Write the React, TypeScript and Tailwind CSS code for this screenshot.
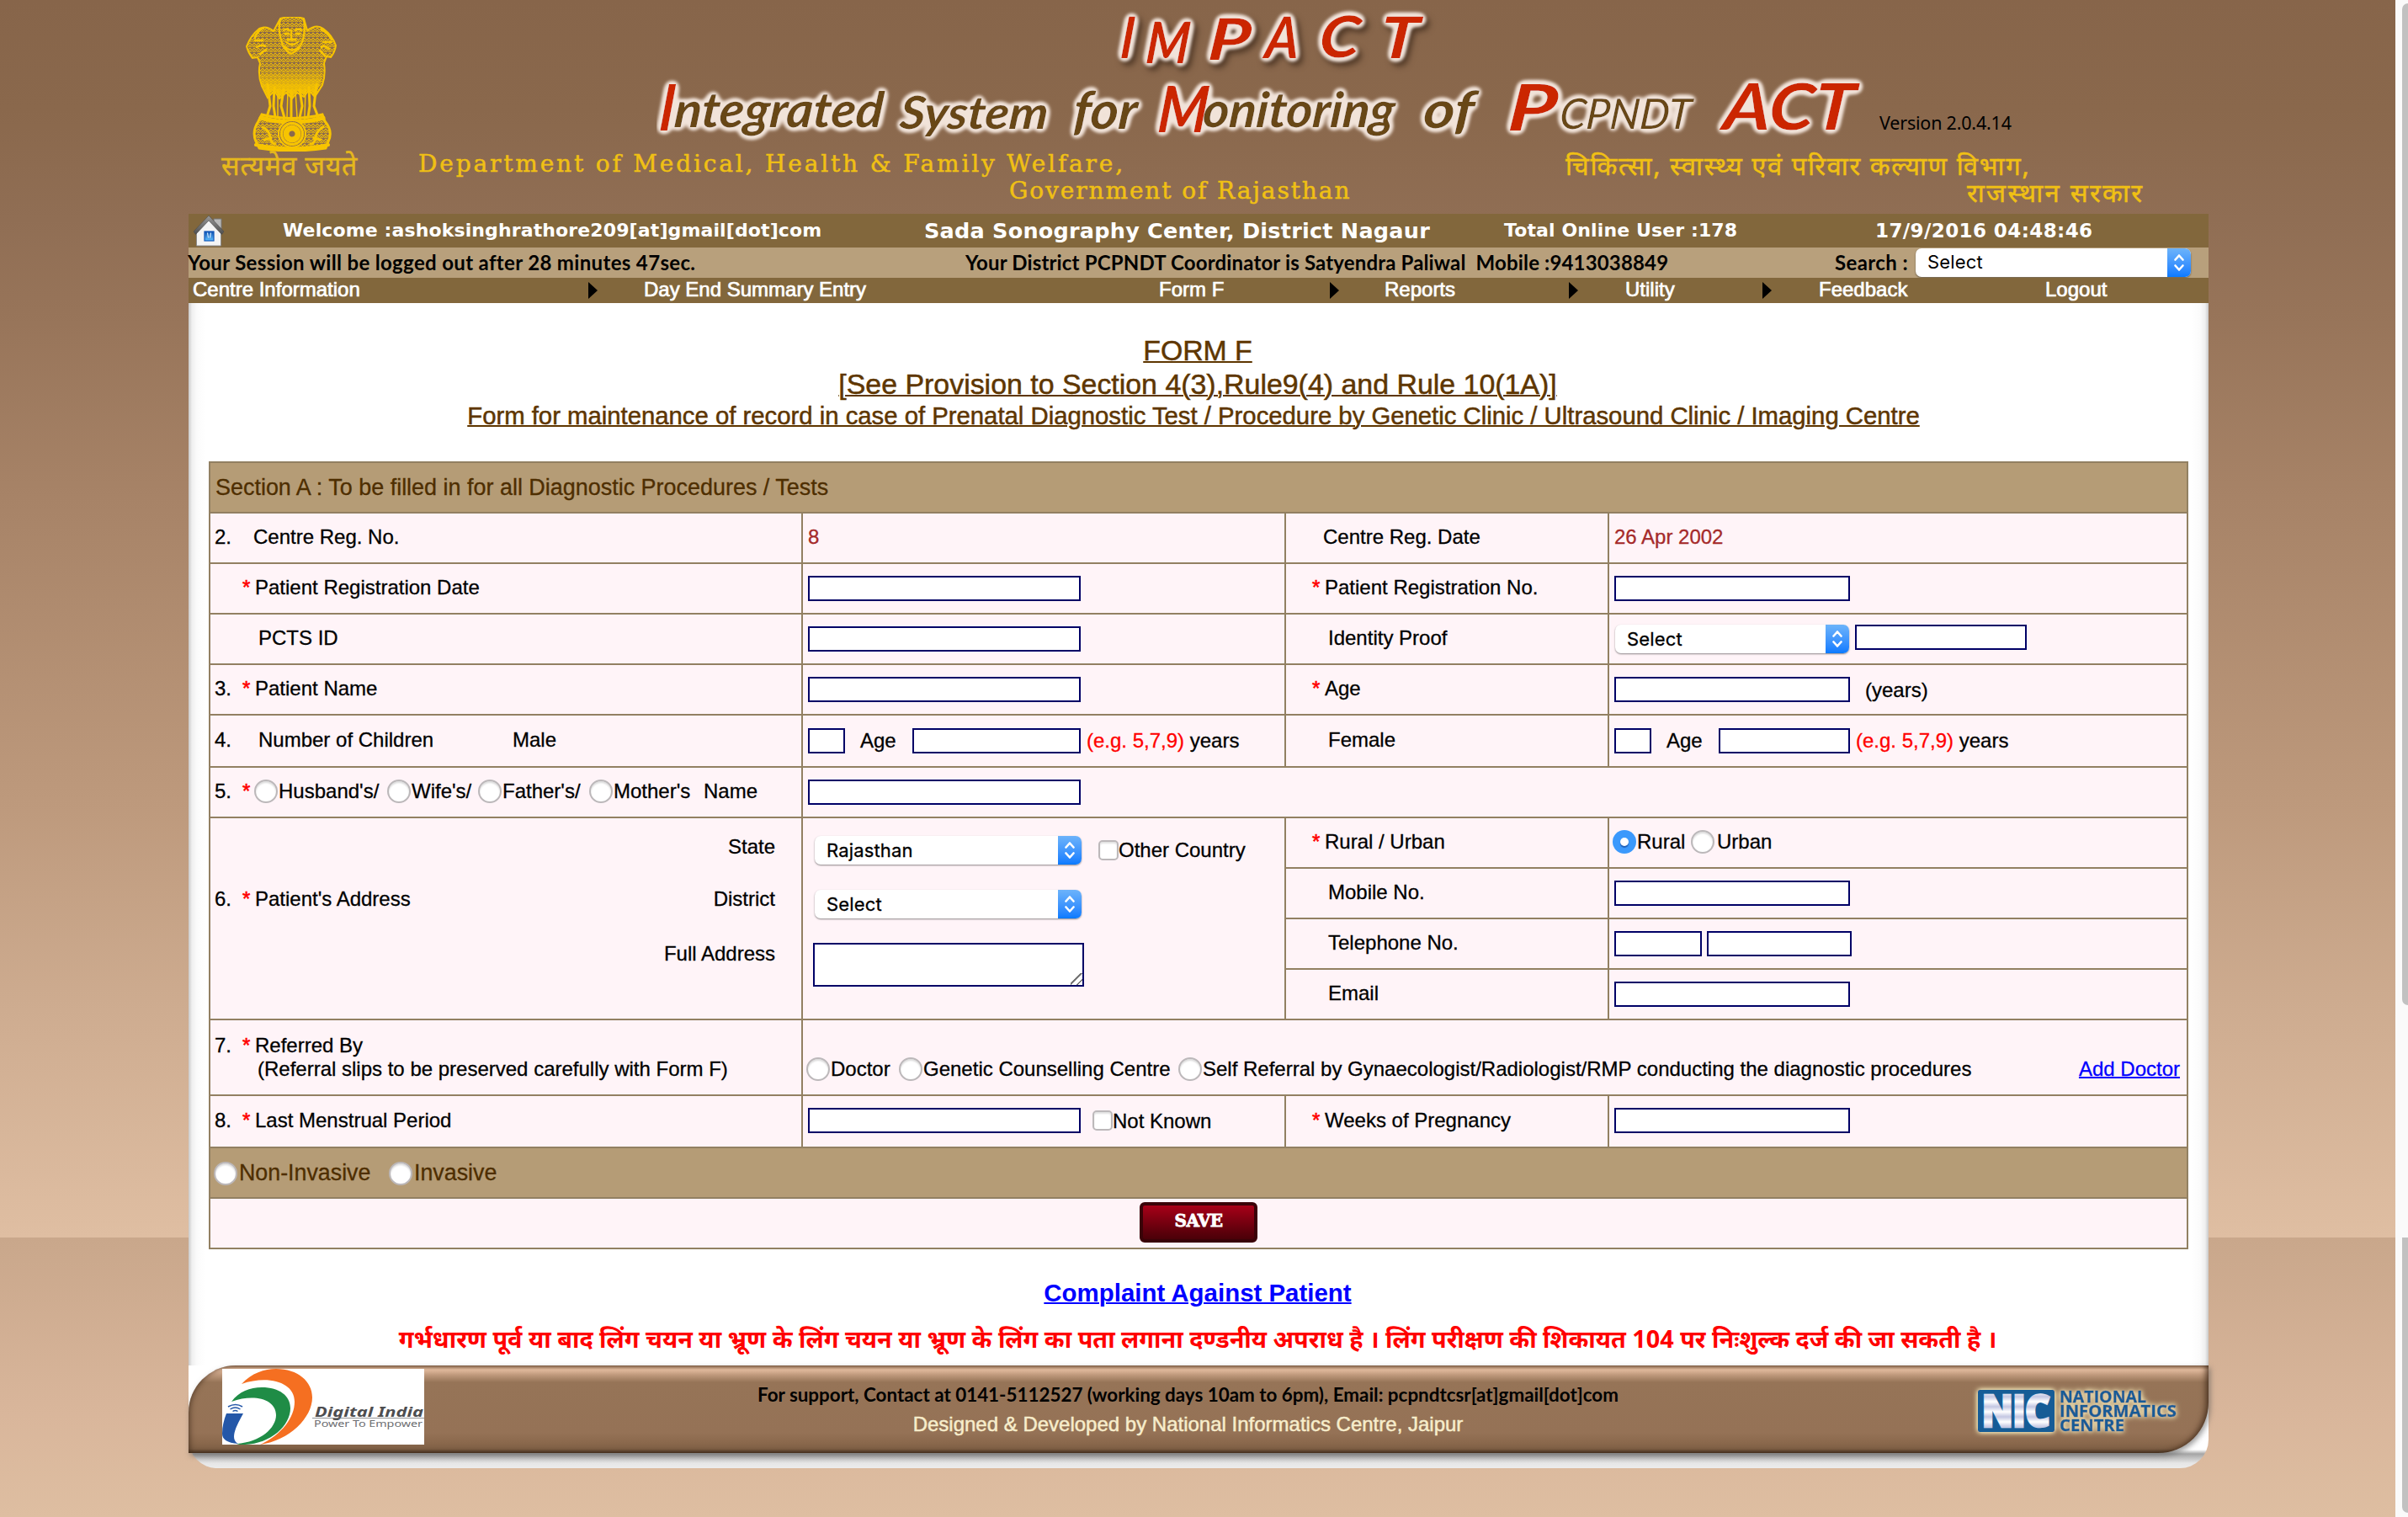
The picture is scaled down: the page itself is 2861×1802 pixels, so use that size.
import type { ReactNode } from "react";

const Star = ({ on = true }: { on?: boolean }) => (
  <span className="w-[15px] shrink-0 text-[#ff0000] [-webkit-text-stroke:0.6px_#ff0000]">{on ? "*" : ""}</span>
);

const Label = ({ n, star, children, className = "" }: { n?: string; star?: boolean; children: ReactNode; className?: string }) => (
  <div className={"flex items-center whitespace-pre bg-[#fff4f8] pb-0.5 pl-[5px] " + className}>
    <span className="w-[33px] shrink-0">{n}</span>
    <Star on={!!star} />
    {children}
  </div>
);

const RLabel = ({ star, children }: { star?: boolean; children: ReactNode }) => (
  <div className="flex items-center whitespace-pre bg-[#fff4f8] pb-0.5 pl-[31px]">
    <Star on={!!star} />
    {children}
  </div>
);

const Cell = ({ children, className = "" }: { children?: ReactNode; className?: string }) => (
  <div className={"flex items-center whitespace-pre bg-[#fff4f8] " + className}>{children}</div>
);

const Input = ({ className }: { className: string }) => (
  <input type="text" className={"h-[30px] shrink-0 border-2 border-[#000066] bg-white px-1 outline-none " + className} />
);

const Chevrons = () => (
  <span className="flex w-7 shrink-0 items-center justify-center bg-linear-to-b from-[#6cb3fa] to-[#077aff]">
    <svg width="14" height="22" viewBox="0 0 14 22" fill="none" stroke="white" strokeWidth="2.6" strokeLinecap="round" strokeLinejoin="round">
      <path d="M2.5 7.5 7 2.5l4.500 5M2.500 14.500 7 19.500l4.500-5" />
    </svg>
  </span>
);

const Select = ({ className, children }: { className: string; children: ReactNode }) => (
  <div className={"flex h-[34px] shrink-0 overflow-hidden rounded-[7px] bg-white font-['Inter',sans-serif] text-[22px] tracking-[0.15px] text-black shadow-[0_1px_2px_rgba(0,0,0,0.45)] " + className}>
    <span className="flex flex-1 items-center pl-3.5">{children}</span>
    <Chevrons />
  </div>
);

const Radio = ({ on, className = "" }: { on?: boolean; className?: string }) =>
  on ? (
    <span className={"flex size-7 shrink-0 items-center justify-center rounded-full bg-[#3b99fc] " + className}>
      <span className="size-2.5 rounded-full bg-white shadow-[0_2px_1px_rgba(0,40,120,0.5)]" />
    </span>
  ) : (
    <span className={"size-7 shrink-0 rounded-full border-2 border-[#bcb8ba] bg-white shadow-[inset_0_2px_2px_rgba(0,0,0,0.14)] " + className} />
  );

const Check = () => (
  <span className="size-6 shrink-0 rounded-[5px] border-2 border-[#bcb8ba] bg-white shadow-[inset_0_2px_2px_rgba(0,0,0,0.12)]" />
);

const Emblem = () => (
  <svg width="110" height="160" viewBox="0 0 110 160" fill="none" stroke="#f7c400" strokeLinecap="round">
    <defs>
      <pattern id="mane" width="5" height="6" patternUnits="userSpaceOnUse">
        <path d="M0 1l2.500 3L5 1M0 4l2.500 3L5 4" stroke="#f7c400" strokeWidth="1.100" />
      </pattern>
      <linearGradient id="fur" x1="0" y1="0" x2="0" y2="1">
        <stop offset="0.250" stopColor="#f7c400" stopOpacity="0" />
        <stop offset="0.700" stopColor="#f7c400" stopOpacity="0.800" />
        <stop offset="1" stopColor="#f7c400" />
      </linearGradient>
    </defs>
    <path d="M41 2q14-4 28 0l4 14q11-8 19-2 11 8 15 20-1 8-6 14l-5-1-3 8q2 15-2 26l-9 14-7-8-6 8-8-5-6 7-7-7-8 7-6-9-8 8-7-14q-5-14-2-27l-3-7-6 1q-5-6-7-14 5-13 15-21 9-4 17 3z" fill="url(#mane)" strokeWidth="2" />
    <path d="M22 48h62q9 16 5 30l-7 15-7-8-6 8-8-5-6 7-7-7-8 7-6-9-8 8-7-14q-4-16 3-32z" fill="url(#fur)" stroke="none" />
    <path d="M41 3q-3 12 1 24 2 12 12 17 11-5 14-17 3-12 1-24M45 16q4-3 7 0M59 16q4-3 7 0M54 16v11M48 30q7 6 14 0M46 35q9 9 18 0" strokeWidth="2.200" />
    <path d="M47 20h4M60 20h4M50 27h9" strokeWidth="3" />
    <path d="M21 13q-8 4-10 12M11 28h9M13 36q6-4 10-1M17 44l7-5M90 15q9 5 12 12M102 30h-10M99 38q-6-5-9-2M94 46l-6-6" strokeWidth="2.600" />
    <path d="M26 80l3 26-4 13M34 84l-1 22 2 13M45 86l-3 20 4 14M54 88v32M64 86l3 20-3 14M75 84l1 22-2 13M84 80l-3 26 5 13" strokeWidth="3" />
    <path d="M38 86v32M50 88l-1 31M59 88l2 31M71 86l-1 32" strokeWidth="1.500" />
    <path d="M19 116q35 9 72 0l3 8q10 12 4 24l-3 8q-41 6-79 0l-4-8q-5-12 3-24z" fill="url(#mane)" strokeWidth="3" />
    <path d="M18 120q36 10 74 0" strokeWidth="5" />
    <path d="M12 152q43 9 86 0" strokeWidth="4" />
    <circle cx="55" cy="139" r="16" fill="#8b694d" strokeWidth="2" />
    <circle cx="55" cy="139" r="12.500" strokeWidth="3.500" strokeDasharray="0.600 2" />
    <circle cx="55" cy="139" r="7" strokeWidth="7" strokeDasharray="0.800 1.400" />
    <path d="M20 131q8 4 9 12t6 8M92 131q-8 4-9 12t-6 8M22 146l8-2M89 146l-8-2" strokeWidth="3" />
  </svg>
);

const words: { t: string; x: number; y: number; w: number; s: number; red?: boolean; thin?: boolean }[] = [
  { t: "I", x: 2, y: 155, w: 18, s: 76, red: true },
  { t: "ntegrated", x: 20, y: 151, w: 248, s: 58 },
  { t: "System", x: 288, y: 153, w: 176, s: 54 },
  { t: "for", x: 494, y: 153, w: 76, s: 62 },
  { t: "M", x: 594, y: 157, w: 60, s: 76, red: true },
  { t: "onitoring", x: 648, y: 151, w: 228, s: 58 },
  { t: "of", x: 910, y: 152, w: 60, s: 61 },
  { t: "P", x: 1010, y: 155, w: 58, s: 76, red: true },
  { t: "CPNDT", x: 1072, y: 153, w: 156, s: 50, thin: true },
  { t: "ACT", x: 1266, y: 154, w: 156, s: 76, red: true },
];

const impact: { t: string; x: number; y: number; w: number }[] = [
  { t: "I", x: 550, y: 69, w: 16 },
  { t: "M", x: 580, y: 75, w: 52 },
  { t: "P", x: 654, y: 71, w: 50 },
  { t: "A", x: 722, y: 69, w: 40 },
  { t: "C", x: 786, y: 68, w: 48 },
  { t: "T", x: 858, y: 69, w: 46 },
];

const Wordmark = () => (
  <svg width="1450" height="176" viewBox="0 0 1450 176" fontFamily="Lato, sans-serif" fontStyle="italic" fontWeight="700" className="shrink-0">
    <defs>
      <filter id="glow" x="-5%" y="-30%" width="110%" height="160%">
        <feGaussianBlur in="SourceAlpha" stdDeviation="4" result="b" />
        <feComponentTransfer in="b" result="s"><feFuncA type="linear" slope="9" intercept="-0.500" /></feComponentTransfer>
        <feGaussianBlur in="s" stdDeviation="1.500" result="e" />
        <feFlood floodColor="#f1e3d9" />
        <feComposite in2="e" operator="in" result="halo" />
        <feMerge><feMergeNode in="halo" /><feMergeNode in="SourceGraphic" /></feMerge>
      </filter>
    </defs>
    <g className="drop-shadow-[4px_5px_3px_rgba(50,32,20,0.65)]">
      <g filter="url(#glow)" fill="#cb2506">
        {impact.map((c) => (
          <text key={c.t} transform={`translate(${c.x} ${c.y}) skewX(-5)`} fontSize="68" textLength={c.w} lengthAdjust="spacingAndGlyphs">{c.t}</text>
        ))}
      </g>
    </g>
    <g filter="url(#glow)">
      {words.map((c) => (
        <text key={c.t} transform={`translate(${c.x} ${c.y}) skewX(-5)`} fontSize={c.s} fill={c.red ? "#cb2506" : "#684719"} fontWeight={c.thin ? 400 : 700} textLength={c.w} lengthAdjust="spacingAndGlyphs">{c.t}</text>
      ))}
    </g>
  </svg>
);

const House = () => (
  <svg width="38" height="38" viewBox="0 0 38 38">
    <defs>
      <linearGradient id="roof" x1="0" y1="0" x2="0" y2="1"><stop offset="0" stopColor="#9a9a9a" /><stop offset="1" stopColor="#4e4e4e" /></linearGradient>
      <linearGradient id="door" x1="0" y1="0" x2="0" y2="1"><stop offset="0" stopColor="#0d4fb0" /><stop offset="1" stopColor="#5fc0ff" /></linearGradient>
    </defs>
    <path d="M25 5h9v12l-9-6z" fill="#b9b9b9" stroke="#777" />
    <path d="M19 4 4.500 20v17h29V20z" fill="#f4f4f4" stroke="#8b8b8b" />
    <path d="M19 1 1 20l2.500 3.500L19 7l15.500 16.500L37 20z" fill="url(#roof)" stroke="#4a4a4a" strokeWidth="0.600" />
    <rect x="14" y="20" width="11" height="11" fill="url(#door)" stroke="#1257b8" strokeWidth="1.200" />
    <path d="M17.500 21.500l1 6M21.500 21.500l-1 6" stroke="#d8efff" strokeWidth="1.200" />
  </svg>
);

const Arrow = () => (
  <svg width="11" height="20" viewBox="0 0 11 20"><path d="M0 0 11 10 0 20z" fill="#000" /></svg>
);

const DigitalIndia = () => (
  <svg width="240" height="90" viewBox="0 0 240 90" className="shrink-0 bg-white">
    <path d="M23 18C35 5 50 0 64 0c26 0 43 15 43 34 0 24-27 51-62 56 26-12 41-32 41-51 0-23-31-32-63-21z" fill="#f56f21" />
    <path d="M11 39C20 27 33 22 47 22c21 0 34 10 34 25 0 20-23 42-54 43-5 0-8 0-10-1 29-2 47-19 47-34 0-19-26-26-53-16z" fill="#1f8c46" />
    <path d="M5 53h20c-7 13-17 30-6 36C6 88 0 84 0 77c0-9 2-16 5-24z" fill="#2457a8" />
    <path d="M7 45q9-5 17 0M9.500 48q6-4 12 0M12.500 50.500q3-2 6 0" fill="none" stroke="#2457a8" strokeWidth="1.500" />
    <text x="110" y="57" fontFamily="Noto Sans, sans-serif" fontStyle="italic" fontWeight="700" fontSize="16" fill="#4d4d4f" textLength="129" lengthAdjust="spacingAndGlyphs">Digital India</text>
    <path d="M107 58.500h133" stroke="#77787b" strokeWidth="0.800" />
    <text x="109" y="68.500" fontFamily="Noto Sans, sans-serif" fontSize="10" fill="#6d6e71" textLength="129" lengthAdjust="spacingAndGlyphs">Power To Empower</text>
  </svg>
);

const Nic = () => (
  <svg width="252" height="72" viewBox="0 0 252 72" fontFamily="Open Sans, sans-serif" fontWeight="700">
    <defs>
      <filter id="halo" x="-10%" y="-20%" width="120%" height="140%">
        <feGaussianBlur in="SourceAlpha" stdDeviation="3" result="b" />
        <feComponentTransfer in="b" result="s"><feFuncA type="linear" slope="2.500" /></feComponentTransfer>
        <feFlood floodColor="#d9c79c" />
        <feComposite in2="s" operator="in" result="h" />
        <feMerge><feMergeNode in="h" /><feMergeNode in="SourceGraphic" /></feMerge>
      </filter>
      <linearGradient id="nicl" x1="0" y1="0" x2="0" y2="6" gradientUnits="userSpaceOnUse" spreadMethod="reflect"><stop offset="0" stopColor="#fff" /><stop offset="1" stopColor="#c3c6e2" /></linearGradient>
    </defs>
    <g filter="url(#halo)" fill="#155b96">
      <rect x="7" y="10" width="91" height="50" rx="2" />
      <g fontSize="19" stroke="#155b96" strokeWidth="0.500">
        <text x="104" y="25" textLength="103" lengthAdjust="spacingAndGlyphs">NATIONAL</text>
        <text x="104" y="42" textLength="139" lengthAdjust="spacingAndGlyphs">INFORMATICS</text>
        <text x="104" y="59" textLength="77" lengthAdjust="spacingAndGlyphs">CENTRE</text>
      </g>
    </g>
    <text x="12" y="53" fontSize="50" fill="url(#nicl)" stroke="url(#nicl)" strokeWidth="4.500" textLength="80" lengthAdjust="spacingAndGlyphs">NIC</text>
  </svg>
);

export default function App() {
  return (
    <div className="flex h-[1802px] w-[2861px] overflow-hidden bg-[linear-gradient(#87654a_0px,#8a684c_130px,#906e54_260px,#977459_370px,#a78367_590px,#bd997c_950px,#ceac90_1200px,#dfbea2_1470px,#c9a78b_1470px,#d9b69b_1680px,#debea1_1802px)] font-['Liberation_Sans',sans-serif] text-2xl leading-7 text-black">
      <div className="ml-[224px] flex w-[2400px] flex-col">
        <header className="flex h-[254px]">
          <div className="flex w-[273px] flex-col pt-5 text-[#e6b81c]">
            <div className="pl-[68px]"><Emblem /></div>
            <div className="-mt-1 pl-[39px] font-['Noto_Sans',sans-serif] text-[32px] leading-[40px] tracking-[0.75px] whitespace-pre [-webkit-text-stroke:0.5px_#e6b81c]">सत्यमेव जयते</div>
          </div>
          <div className="flex flex-1 flex-col">
            <div className="flex h-[176px] pl-[283px]">
              <Wordmark />
              <span className="mt-[132px] ml-[3px] font-['Noto_Sans',sans-serif] text-[21.5px] tracking-[-0.2px] whitespace-pre">Version 2.0.4.14</span>
            </div>
            <div className="flex text-[#f0c014] [-webkit-text-stroke:0.5px_#f0c014]">
              <div className="w-[1363px] pt-[3px] font-['DejaVu_Serif',serif] text-[28px] leading-[32px] whitespace-pre">
                <div className="tracking-[2.83px]">Department of Medical, Health &amp; Family Welfare,</div>
                <div className="pl-[702px] tracking-[1.9px]">Government of Rajasthan</div>
              </div>
              <div className="pt-[4px] font-['Noto_Sans',sans-serif] text-[31px] leading-[32px] whitespace-pre">
                <div className="tracking-[1.72px]">चिकित्सा, स्वास्थ्य एवं परिवार कल्याण विभाग,</div>
                <div className="pl-[477px] tracking-[2.4px]">राजस्थान सरकार</div>
              </div>
            </div>
          </div>
        </header>

        <div className="grid h-10 grid-cols-[112px_762px_689px_441px_1fr] items-center bg-[#82673c] font-['DejaVu_Sans',sans-serif] text-[22px] font-bold whitespace-pre text-white">
          <div className="pl-[5px]"><House /></div>
          <div className="tracking-[0.12px]">Welcome :ashoksinghrathore209[at]gmail[dot]com</div>
          <div className="text-[25.5px] tracking-[0.23px]">Sada Sonography Center, District Nagaur</div>
          <div className="tracking-[0.12px]">Total Online User :178</div>
          <div className="text-[23px] tracking-[0.4px]">17/9/2016 04:48:46</div>
        </div>
        <div className="grid h-9 grid-cols-[924px_1032px_96px_1fr] items-center bg-[#b8a07c] font-['Lato',sans-serif] text-2xl font-bold whitespace-pre">
          <div className="-ml-px tracking-[0.34px]">Your Session will be logged out after 28 minutes 47sec.</div>
          <div className="-ml-px tracking-[0.16px]">Your District PCPNDT Coordinator is Satyendra Paliwal  Mobile :9413038849</div>
          <div className="tracking-[0.4px]">Search :</div>
          <Select className="w-[327px] font-normal">Select</Select>
        </div>
        <nav className="grid h-[30px] grid-cols-[470px_66px_612px_203px_65px_219px_67px_163px_67px_269px_1fr] items-center bg-[#82673c] pl-[5px] leading-[30px] whitespace-pre text-white [-webkit-text-stroke:0.7px_white]">
          <span className="-mt-[3px]">Centre Information</span><Arrow />
          <span className="-mt-[3px]">Day End Summary Entry</span><span className="-mt-[3px]">Form F</span><Arrow />
          <span className="-mt-[3px]">Reports</span><Arrow />
          <span className="-mt-[3px]">Utility</span><Arrow />
          <span className="-mt-[3px]">Feedback</span><span className="-mt-[3px]">Logout</span>
        </nav>

        <main className="flex h-[1262px] flex-col bg-[linear-gradient(90deg,#c9c9c9_0px,#efefef_4px,#fbfbfb_10px,#fff_20px,#fff_2380px,#fbfbfb_2390px,#efefef_2396px,#c9c9c9_2400px)] px-6 pt-9">
          <div className="flex flex-col items-center whitespace-pre text-[#5e3600] underline decoration-2 [-webkit-text-stroke:0.5px_#5e3600]">
            <div className="pr-0.5 text-[33.8px] leading-10">FORM F</div>
            <div className="pr-0.5 text-[33.9px] leading-10">[See Provision to Section 4(3),Rule9(4) and Rule 10(1A)]</div>
            <div className="pr-3 text-[29.3px] leading-9">Form for maintenance of record in case of Prenatal Diagnostic Test / Procedure by Genetic Clinic / Ultrasound Clinic / Imaging Centre</div>
          </div>

          <div className="mt-9 grid shrink-0 grid-cols-[702px_572px_382px_686px] grid-rows-[58px_58px_58px_58px_58px_60px_58px_58px_58px_58px_58px_88px_60px_58px_58px] gap-0.5 border-2 border-[#928062] bg-[#928062] [-webkit-text-stroke:0.3px]">
            <div className="col-span-4 flex items-center bg-[#b59c76] pl-1.5 text-[26.95px] text-[#4e2e00]">Section A : To be filled in for all Diagnostic Procedures / Tests</div>

            <Label n="2."><span className="-ml-0.5">Centre Reg. No.</span></Label>
            <Cell className="pb-0.5 pl-1.5 text-[#a52a2a]">8</Cell>
            <RLabel><span className="-ml-0.5">Centre Reg. Date</span></RLabel>
            <Cell className="pb-0.5 pl-1.5 text-[#a52a2a]">26 Apr 2002</Cell>

            <Label star>Patient Registration Date</Label>
            <Cell className="pl-1.5"><Input className="w-[324px]" /></Cell>
            <RLabel star>Patient Registration No.</RLabel>
            <Cell className="pl-1.5"><Input className="w-[280px]" /></Cell>

            <Label><span className="ml-1">PCTS ID</span></Label>
            <Cell className="pl-1.5"><Input className="w-[324px]" /></Cell>
            <RLabel><span className="ml-1">Identity Proof</span></RLabel>
            <Cell className="gap-[7px] pb-1 pl-[7px]"><Select className="mt-[3px] w-[278px]">Select</Select><Input className="w-[204px]" /></Cell>

            <Label n="3." star>Patient Name</Label>
            <Cell className="pl-1.5"><Input className="w-[324px]" /></Cell>
            <RLabel star>Age</RLabel>
            <Cell className="pl-1.5"><Input className="w-[280px]" /><span className="pt-0.5 pl-[18px]">(years)</span></Cell>

            <Label n="4."><span className="ml-1 w-[302px]">Number of Children</span><span>Male</span></Label>
            <Cell className="pl-1.5"><Input className="w-11" /><span className="w-20 pl-[18px]">Age</span><Input className="w-[200px]" /><span className="pl-[7px] text-[#ff0000]">(e.g. 5,7,9)</span> years</Cell>
            <RLabel><span className="ml-1">Female</span></RLabel>
            <Cell className="pl-1.5"><Input className="w-11" /><span className="w-20 pl-[18px]">Age</span><Input className="w-[156px]" /><span className="pl-[7px] text-[#ff0000]">(e.g. 5,7,9)</span> years</Cell>

            <Label n="5." star>
              <span className="-ml-px flex w-[158px] items-center"><Radio className="mr-px" />Husband's/</span>
              <span className="flex w-[108px] items-center"><Radio className="mr-px" />Wife's/</span>
              <span className="flex w-[132px] items-center"><Radio className="mr-px" />Father's/</span>
              <span className="flex w-[135px] items-center"><Radio className="mr-px" />Mother's</span>
              <span className="pl-px">Name</span>
            </Label>
            <Cell className="col-span-3 pl-1.5"><Input className="w-[324px]" /></Cell>

            <div className="row-span-4 flex bg-[#fff4f8] whitespace-pre">
              <div className="flex w-[400px] items-center pb-[46px] pl-[5px]">
                <span className="w-[33px]">6.</span><Star /><span>Patient's Address</span>
              </div>
              <div className="flex flex-1 flex-col gap-[34px] pt-[20px] pr-[31px] text-right">
                <span>State</span><span>District</span><span className="pt-[3px]">Full Address</span>
              </div>
            </div>
            <div className="row-span-4 flex flex-col items-start bg-[#fff4f8] pt-[21px] pl-3.5 whitespace-pre">
              <div className="flex items-center"><Select className="w-[317px]">Rajasthan</Select><span className="w-5" /><Check /><span>Other Country</span></div>
              <Select className="mt-[30px] w-[317px]">Select</Select>
              <textarea className="mt-[29px] -ml-0.5 h-[52px] w-[322px] resize-none border-2 border-[#000066] bg-white bg-[linear-gradient(135deg,transparent_0_42%,#777_42%_52%,transparent_52%_72%,#777_72%_82%,transparent_82%)] bg-[size:14px_14px] bg-[position:100%_100%] bg-no-repeat" />
            </div>
            <RLabel star>Rural / Urban</RLabel>
            <Cell className="pb-0.5 pl-1"><Radio on className="mr-px" /><span className="w-[64px]">Rural</span><Radio /><span className="pl-[3px]">Urban</span></Cell>
            <RLabel><span className="ml-1">Mobile No.</span></RLabel>
            <Cell className="pl-1.5"><Input className="w-[280px]" /></Cell>
            <RLabel><span className="ml-1">Telephone No.</span></RLabel>
            <Cell className="gap-1.5 pl-1.5"><Input className="w-[104px]" /><Input className="w-[172px]" /></Cell>
            <RLabel><span className="ml-1">Email</span></RLabel>
            <Cell className="pl-1.5"><Input className="w-[280px]" /></Cell>

            <div className="flex flex-col justify-center bg-[#fff4f8] pb-px pl-[5px] whitespace-pre">
              <div className="flex"><span className="w-[33px]">7.</span><Star />Referred By</div>
              <div className="pl-[51px]">(Referral slips to be preserved carefully with Form F)</div>
            </div>
            <Cell className="col-span-3 pt-7 pr-2 pl-1">
              <span className="flex w-[110px] items-center"><Radio className="mr-px" />Doctor</span>
              <span className="flex w-[332px] items-center"><Radio className="mr-px" />Genetic Counselling Centre</span>
              <span className="flex flex-1 items-center"><Radio className="mr-px" />Self Referral by Gynaecologist/Radiologist/RMP conducting the diagnostic procedures</span>
              <a className="text-[#0000ff] underline decoration-2">Add Doctor</a>
            </Cell>

            <Label n="8." star>Last Menstrual Period</Label>
            <Cell className="pb-0.5 pl-1.5"><Input className="w-[324px]" /><span className="w-3.5" /><Check /><span className="pt-0.5">Not Known</span></Cell>
            <RLabel star>Weeks of Pregnancy</RLabel>
            <Cell className="pb-0.5 pl-1.5"><Input className="w-[280px]" /></Cell>

            <div className="col-span-4 flex items-center bg-[#b59c76] pl-1 text-[26.8px] text-[#4e2e00]">
              <span className="flex w-[208px] items-center"><Radio className="mt-0.5 mr-0.5" />Non-Invasive</span>
              <span className="flex items-center"><Radio className="mt-0.5 mr-0.5" />Invasive</span>
            </div>
            <div className="col-span-4 flex items-start justify-center bg-[#fff4f8] pt-1">
              <button className="h-12 w-[140px] rounded-[6px] border-4 border-[#3a0208] bg-linear-to-b from-[#a80018] to-[#4a0008] pb-1 font-['DejaVu_Serif',serif] text-[20px] leading-[36px] font-bold tracking-[-0.6px] text-white [-webkit-text-stroke:0.8px_white]">SAVE</button>
            </div>
          </div>

          <div className="mt-8 flex flex-col items-center whitespace-pre">
            <a className="pr-0.5 text-[29.45px] leading-10 font-bold text-[#0000ff] underline decoration-2">Complaint Against Patient</a>
            <div className="mt-[10px] pr-0.5 font-['Noto_Sans',sans-serif] text-[28.78px] leading-[48px] font-bold text-[#ff0000]">गर्भधारण पूर्व या बाद लिंग चयन या भ्रूण के लिंग चयन या भ्रूण के लिंग का पता लगाना दण्डनीय अपराध है । लिंग परीक्षण की शिकायत 104 पर निःशुल्क दर्ज की जा सकती है ।</div>
          </div>
        </main>

        <footer className="h-[122px] rounded-b-[34px] bg-[linear-gradient(#fff_0px,#fff_100px,#a5a5a5_105px,#e6e6e6_116px,#ececec_122px)]">
          <div className="flex h-[104px] items-start justify-between rounded-tl-[56px] rounded-br-[60px] bg-[linear-gradient(#a07b5e_0px,#e2bb9e_5px,#c09a7d_11px,#967457_20px,#957256_80px,#8a684c_92px,#7e5f45_99px,#4d3825_104px)] pt-1 pl-10 shadow-[inset_-5px_0_7px_-2px_rgba(50,30,15,0.75),inset_4px_0_6px_-2px_rgba(60,40,25,0.6),2px_3px_6px_rgba(90,90,90,0.6)]">
            <DigitalIndia />
            <div className="flex flex-col items-center pt-[17px] pr-5 whitespace-pre">
              <div className="mr-1 font-['Lato',sans-serif] text-[22.4px] leading-7 font-bold">For support, Contact at 0141-5112527 (working days 10am to 6pm), Email: pcpndtcsr[at]gmail[dot]com</div>
              <div className="mt-[7px] mr-1 leading-7 text-[#f7edcb] [-webkit-text-stroke:0.5px_#f7edcb]">Designed &amp; Developed by National Informatics Centre, Jaipur</div>
            </div>
            <div className="pt-[15px] pr-[29px]"><Nic /></div>
          </div>
        </footer>
      </div>
      <div className="ml-auto flex w-[15px] flex-col items-end bg-[#fafafa] pt-1">
        <div className="h-[1190px] w-[7px] rounded-l-full bg-[#c1c1c1]" />
        <div className="mt-[276px] h-[327px] w-[7px] rounded-bl-full bg-[#c1c1c1]" />
      </div>
    </div>
  );
}
